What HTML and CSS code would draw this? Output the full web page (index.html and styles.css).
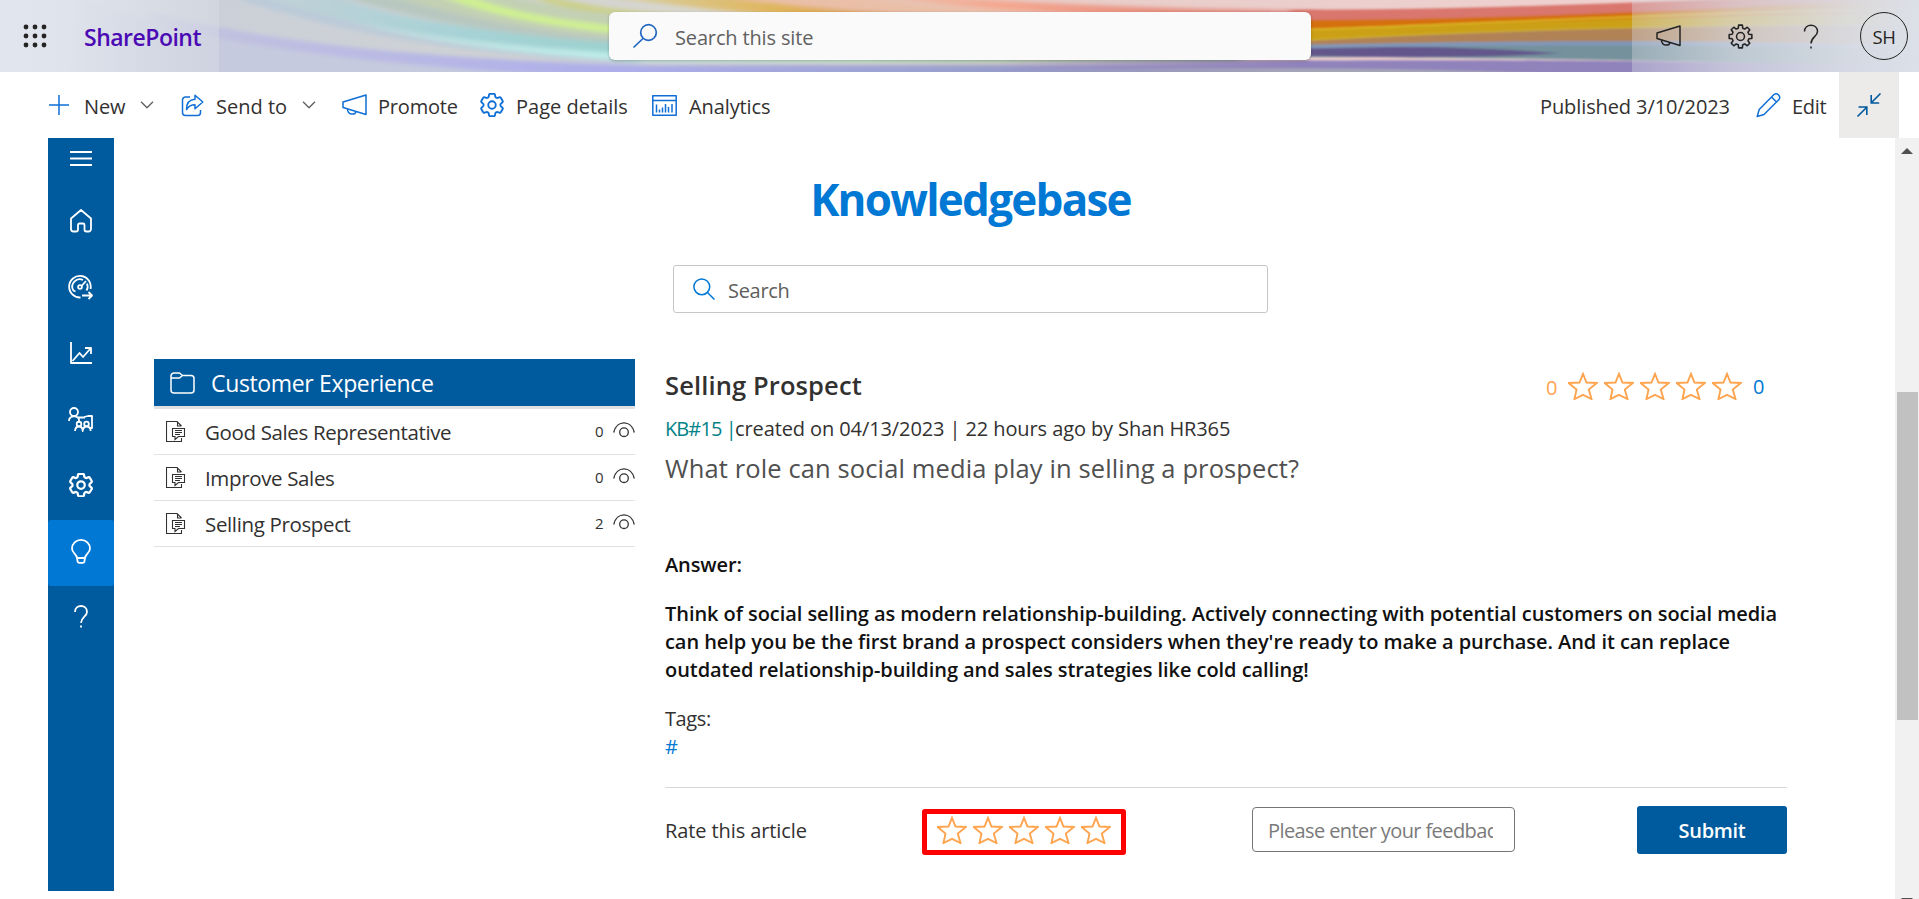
FILE: index.html
```html
<!DOCTYPE html>
<html lang="en">
<head>
<meta charset="utf-8">
<title>Knowledgebase</title>
<link rel="stylesheet" href="styles.css">
</head>
<body>
<svg class="defs" aria-hidden="true">
  <symbol id="gear6" viewBox="2.4 2.4 19.2 19.2"><path d="M9.594 3.94c.09-.542.56-.94 1.11-.94h2.593c.55 0 1.02.398 1.11.94l.213 1.281c.063.374.313.686.645.87.074.04.147.083.22.127.325.196.72.257 1.075.124l1.217-.456a1.125 1.125 0 0 1 1.37.49l1.296 2.247a1.125 1.125 0 0 1-.26 1.431l-1.003.827c-.293.241-.438.613-.43.992a7.723 7.723 0 0 1 0 .255c-.008.378.137.75.43.991l1.004.827c.424.35.534.955.26 1.43l-1.298 2.247a1.125 1.125 0 0 1-1.369.491l-1.217-.456c-.355-.133-.75-.072-1.076.124a6.47 6.47 0 0 1-.22.128c-.331.183-.581.495-.644.869l-.213 1.281c-.09.543-.56.94-1.11.94h-2.594c-.55 0-1.019-.398-1.11-.94l-.213-1.281c-.062-.374-.312-.686-.644-.87a6.52 6.52 0 0 1-.22-.127c-.325-.196-.72-.257-1.076-.124l-1.217.456a1.125 1.125 0 0 1-1.369-.49l-1.297-2.247a1.125 1.125 0 0 1 .26-1.431l1.004-.827c.292-.24.437-.613.43-.991a6.932 6.932 0 0 1 0-.255c.007-.38-.138-.751-.43-.992l-1.004-.827a1.125 1.125 0 0 1-.26-1.43l1.297-2.247a1.125 1.125 0 0 1 1.37-.491l1.216.456c.356.133.751.072 1.076-.124.072-.044.146-.086.22-.128.332-.183.582-.495.644-.869l.214-1.28Z"/><circle cx="12" cy="12" r="3"/></symbol>
  <symbol id="mega" viewBox="0 0 25 22"><path d="M24 1v19.5L1 13.5V8Z"/><path d="M5.500 15.200c.3 6 7.500 6 8.500 2.500"/></symbol>
  <symbol id="star" viewBox="0 0 30 28"><path d="M15 1.800l3.500 8.700 10.300.5-8 6.500 2.700 9.500L15 22.800 6.500 27l2-9.500-7.800-6.500 10.800-.5Z"/></symbol>
  <symbol id="doc" viewBox="0 0 20 21"><path d="M15.500 17v3.500H.5V.5h10.500L15.500 5M11.500.5V5h4"/><path d="M6.500 7.500h12v8h-6l-3.500 3v-3H6.500Z" fill="#fff"/><path d="M9 9.500h7M9 11.500h7M9 13.500h5"/></symbol>
  <symbol id="eye" viewBox="0 0 22 16"><path d="M.7 10.500C3.500-2.400 18.500-2.400 21.300 10.500"/><circle cx="11" cy="10.200" r="4.300"/></symbol>
  <symbol id="chev" viewBox="0 0 14 8"><path d="M1 .8l6 6 6-6"/></symbol>
</svg>

<header class="suite">
  <svg class="banner" viewBox="0 0 1919 72" preserveAspectRatio="none" aria-hidden="true">
    <defs>
      <linearGradient id="base"><stop offset="0" stop-color="#d9dde6"/><stop offset=".12" stop-color="#cbd0d8"/><stop offset=".25" stop-color="#cfd2d4"/><stop offset=".36" stop-color="#d8d6cf"/><stop offset=".55" stop-color="#e8cdc9"/><stop offset="1" stop-color="#f2d3d3"/></linearGradient>
      <linearGradient id="cy"><stop offset="0" stop-color="#c4d0d8"/><stop offset=".5" stop-color="#a8d2d6"/><stop offset="1" stop-color="#9ad2ce"/></linearGradient>
      <linearGradient id="ltcy"><stop offset="0" stop-color="#c0d4da"/><stop offset=".4" stop-color="#bdf2ec"/><stop offset=".6" stop-color="#b8f6cc"/><stop offset="1" stop-color="#8fa98c"/></linearGradient>
      <linearGradient id="pu"><stop offset="0" stop-color="#c4c4de"/><stop offset=".4" stop-color="#adaeea"/><stop offset=".7" stop-color="#989fcc"/><stop offset="1" stop-color="#8c7fba"/></linearGradient>
      <linearGradient id="gold"><stop offset="0" stop-color="#d6d2a8"/><stop offset=".5" stop-color="#e0b55c"/><stop offset="1" stop-color="#d8905a"/></linearGradient>
      <linearGradient id="sal"><stop offset="0" stop-color="#e8c4b0"/><stop offset=".3" stop-color="#f5a890"/><stop offset="1" stop-color="#d9756c"/></linearGradient>
      <linearGradient id="fade"><stop offset="0" stop-color="#dce0e8" stop-opacity=".35"/><stop offset=".35" stop-color="#dce0e8" stop-opacity=".7"/><stop offset=".75" stop-color="#dce0e8" stop-opacity=".92"/><stop offset="1" stop-color="#dce0e8"/></linearGradient>
      <linearGradient id="fadel"><stop offset="0" stop-color="#e1e5ed"/><stop offset=".3" stop-color="#dfe3eb"/><stop offset="1" stop-color="#d8dce4" stop-opacity=".5"/></linearGradient>
      <linearGradient id="in"><stop offset="0" stop-color="#fff" stop-opacity="0"/><stop offset="1" stop-color="#fff"/></linearGradient>
      <mask id="reveal" maskUnits="userSpaceOnUse" x="1000" y="-10" width="930" height="100"><rect x="1000" y="-10" width="300" height="100" fill="url(#in)"/><rect x="1300" y="-10" width="630" height="100" fill="#fff"/></mask>
      <filter id="soft" x="-2%" y="-20%" width="104%" height="140%"><feGaussianBlur stdDeviation="5 2"/></filter>
      <filter id="fine" x="-2%" y="-20%" width="104%" height="140%"><feGaussianBlur stdDeviation="3 .8"/></filter>
    </defs>
    <rect width="1919" height="72" fill="url(#base)"/>
    <g filter="url(#soft)">
      <path d="M80 0C200 40 400 66 700 76H60Z" fill="#c5cade"/>
      <path d="M230 -4C310 24 430 54 640 64V48C480 44 350 24 280 -4Z" fill="#bccad8"/>
      <path d="M150 12C300 48 430 58 640 65L1320 64V80H640C450 70 300 58 150 24Z" fill="url(#pu)"/>
      <path d="M285 -4C360 34 480 53 640 61L1240 62V52H640C500 46 400 32 330 6Z" fill="url(#ltcy)"/>
      <path d="M250 -6C330 20 440 44 640 54V40C500 36 390 20 330 -6Z" fill="url(#cy)"/>
      <path d="M340 -4C400 14 480 36 640 44V30C540 26 440 12 390 -4Z" fill="#b8c8c0"/>
      <path d="M390 -4C450 14 530 32 640 41V14C580 10 540 4 510 -4Z" fill="#c3d0b4"/>
      <path d="M440 -4C490 16 550 27 640 36V28C570 22 510 12 470 -4Z" fill="#cff090"/>
      <path d="M550 -4C600 10 660 14 720 15H640C590 14 550 6 530 -4Z" fill="#ccd08a"/>
      <path d="M600 -4C680 6 740 13 800 17H960C860 12 780 4 730 -4Z" fill="url(#gold)"/>
      <path d="M720 -4C800 8 880 14 960 16H1100C980 10 900 4 860 -4Z" fill="#eabfa8"/>
      <path d="M860 -4C940 6 1020 12 1120 16H1320V11C1180 10 1040 4 940 -4Z" fill="url(#sal)"/>
    </g>
    <g filter="url(#fine)" mask="url(#reveal)">
      <path d="M1000 60C1320 62 1400 58 1700 62L1930 64V80H1000Z" fill="#9082bb"/>
      <path d="M1000 70C1200 67 1400 67 1560 74H1000Z" fill="#a5a5b8"/>
      <path d="M1290 44C1450 38 1600 36 1930 46V66C1700 62 1450 56 1290 57Z" fill="#74919c"/>
      <path d="M1290 48C1380 44 1480 48 1560 53 1480 59 1380 57 1290 56Z" fill="#62578b"/>
      <path d="M1290 42C1450 41 1600 36 1930 46V51C1650 42 1450 46 1290 49Z" fill="#8197b8"/>
      <path d="M1290 36C1450 26 1650 18 1930 10V46C1650 38 1450 42 1290 45Z" fill="#b08257"/>
      <path d="M1290 30C1450 24 1600 14 1930 6V24C1700 24 1480 28 1290 42Z" fill="#cba012"/>
      <path d="M1290 18C1450 18 1600 12 1930 -4V14C1700 14 1480 24 1290 31Z" fill="#d4700f"/>
      <path d="M1290 10C1450 10 1600 4 1800 -4H1930C1700 10 1500 20 1290 20Z" fill="#d9766d"/>
      <path d="M1290 41C1450 32 1650 24 1930 24" fill="none" stroke="#d0b02c" stroke-width="1.500"/>
      <path d="M1290 30C1450 26 1600 15 1930 8" fill="none" stroke="#dec02a" stroke-width="1.500"/>
    </g>
    <rect width="219" height="72" fill="url(#fadel)"/>
    <rect x="1632" width="287" height="72" fill="url(#fade)"/>
  </svg>
  <svg class="waffle" viewBox="0 0 24 24" width="24" height="24"><g fill="#242424"><circle cx="3" cy="3" r="2.400"/><circle cx="12" cy="3" r="2.400"/><circle cx="21" cy="3" r="2.400"/><circle cx="3" cy="12" r="2.400"/><circle cx="12" cy="12" r="2.400"/><circle cx="21" cy="12" r="2.400"/><circle cx="3" cy="21" r="2.400"/><circle cx="12" cy="21" r="2.400"/><circle cx="21" cy="21" r="2.400"/></g></svg>
  <a class="brand">SharePoint</a>
  <div class="site-search">
    <svg class="ico" width="26" height="26" viewBox="0 0 26 26"><circle cx="16.500" cy="9.500" r="7.800"/><path d="M11 15.500L1.500 24.500"/></svg>
    <span>Search this site</span>
  </div>
  <div class="suite-actions">
    <svg class="ico" width="25" height="22"><use href="#mega"/></svg>
    <svg class="ico" width="25" height="25" viewBox="-12 -12 24 24"><path d="M-2.150-8L-1.800-10.900H1.800L2.150-8 4.140-7.180 6.450-8.900 8.900-6.450 7.180-4.140 8-2.150 10.900-1.800V1.800L8 2.150 7.180 4.140 8.900 6.450 6.450 8.900 4.140 7.180 2.150 8 1.800 10.900H-1.800L-2.150 8-4.140 7.180-6.450 8.900-8.900 6.450-7.180 4.140-8 2.150-10.900 1.800V-1.800L-8-2.150-7.180-4.140-8.900-6.450-6.450-8.900-4.140-7.180Z"/><circle r="3.800"/></svg>
    <svg class="ico" width="16" height="25" viewBox="0 0 16 25"><path d="M1.500 7.500C1.500-1 14.500-1 14.500 7.500c0 5-6.500 5.500-6.500 12M8 22.500v2"/></svg>
    <span class="avatar">SH</span>
  </div>
</header>

<nav class="commands">
  <svg class="ico c-new" width="20" height="20" viewBox="0 0 20 20"><path d="M10 0v20M0 10h20"/></svg>
  <span class="t-new">New</span>
  <svg class="ico chev" width="14" height="8"><use href="#chev"/></svg>
  <svg class="ico c-send" width="23" height="23" viewBox="0 0 23 23"><path d="M9 3H4.500A3 3 0 0 0 1.500 6v12.500a3 3 0 0 0 3 3h12a3 3 0 0 0 3-3V16"/><path d="M14 1.200l7.800 6.800-7.800 6.800v-4c-4 0-6.500 1.500-8.500 4.700 0-6 3-10 8.500-10.300Z"/></svg>
  <span class="t-send">Send to</span>
  <svg class="ico chev" width="14" height="8"><use href="#chev"/></svg>
  <svg class="ico c-mega" width="25" height="22"><use href="#mega"/></svg>
  <span class="t-promote">Promote</span>
  <svg class="ico c-gear" width="24" height="24"><use href="#gear6"/></svg>
  <span class="t-details">Page details</span>
  <svg class="ico c-chart" width="25" height="21" viewBox="0 0 25 21"><path d="M.8.800h23.400v19.400H.8ZM.8 5.500h23.400"/><path d="M4.500 9.500v8M7.500 14.500v3M10.500 12.500v5M13.500 9v8.500M16.500 12v5.500M20 9v8.500"/></svg>
  <span class="t-analytics">Analytics</span>
  <span class="published">Published 3/10/2023</span>
  <svg class="ico c-edit" width="25" height="26" viewBox="0 0 25 26"><path d="M1.200 24.500l2-7L18 2.500a3.600 3.600 0 0 1 5 5L8 22.500ZM15.500 5l5 5"/></svg>
  <span class="t-edit">Edit</span>
  <span class="toggle"><svg class="ico" width="24" height="24" viewBox="0 0 24 24"><path d="M23.500.5l-9 9M14.200 2v8h8M.5 23.500l9-9M1.500 14h8.300v8"/></svg></span>
</nav>

<div class="workspace">
  <aside class="rail">
    <div class="rail-item menu"><svg class="ico" width="22" height="15" viewBox="0 0 22 15"><path d="M0 1h22M0 7.500h22M0 14h22"/></svg></div>
    <div class="rail-item"><svg class="ico" width="22" height="24" viewBox="0 0 22 24"><path d="M1 9.500L11 1l10 8.500V20a2.500 2.500 0 0 1-2.500 2.500h-2A2 2 0 0 1 14.500 20.500V16a1.500 1.500 0 0 0-1.500-1.500H9.500A1.500 1.500 0 0 0 8 16v4.500a2 2 0 0 1-2 2H3.500A2.500 2.500 0 0 1 1 20Z"/></svg></div>
    <div class="rail-item"><svg class="ico" width="25" height="25" viewBox="0 0 25 25"><path d="M12.500 22.500A10.800 10.800 0 1 1 22.500 14"/><path d="M5.300 15.500A7.500 7.500 0 0 1 15 5M19 8.500a7.500 7.500 0 0 1-.5 7M5.300 15.500l2.200 1M18 6l-4.500 5"/><circle cx="12" cy="12" r="1.900"/><path d="M14 20.500h10M20.500 17l3.500 3.500-3.500 3.500"/></svg></div>
    <div class="rail-item"><svg class="ico" width="22" height="22" viewBox="0 0 22 22"><path d="M1 0v21h21M2.500 19L9.500 11l3.500 4 7.500-8.500M15 6h6v6"/></svg></div>
    <div class="rail-item"><svg class="ico" width="25" height="25" viewBox="0 0 25 25"><circle cx="6" cy="5" r="4"/><path d="M1 14c0-6 10-6 10-1v3M10 10.500h7M16 10l4-1h4v12h-2"/><circle cx="11" cy="17" r="2.300"/><circle cx="18.500" cy="17" r="2.300"/><path d="M7 24c.5-6 7.500-6 7.700 0 .5-6 7.500-6 8 0"/></svg></div>
    <div class="rail-item"><svg class="ico" width="24" height="24"><use href="#gear6"/></svg></div>
    <div class="rail-item active"><svg class="ico" width="20" height="25" viewBox="0 0 20 25"><path d="M6 19C5.500 15 1 14 1 9.500a9 8.700 0 0 1 18 0C19 14 14.500 15 14 19l-.5 3a2 2 0 0 1-2 1.800h-3a2 2 0 0 1-2-1.800ZM6 19h8"/></svg></div>
    <div class="rail-item help"><svg class="ico" width="14" height="23" viewBox="0 0 14 23"><path d="M1 7C1-1 13-1 13 7c0 4.500-6 5-6 11M7 20.500v2"/></svg></div>
  </aside>

  <main class="content">
    <h1>Knowledgebase</h1>
    <div class="kb-search">
      <svg class="ico" width="22" height="22" viewBox="0 0 22 22"><circle cx="8.800" cy="8.800" r="7.900"/><path d="M14.500 14.500l7 7"/></svg>
      <span>Search</span>
    </div>
    <div class="columns">
      <section class="list">
        <h2><svg class="ico" width="25" height="22" viewBox="0 0 25 22"><path d="M1 4a3 3 0 0 1 3-3h5.500l3 2.500H21a3 3 0 0 1 3 3V18a3 3 0 0 1-3 3H4a3 3 0 0 1-3-3ZM1 6h8.500l3-2.500"/></svg>Customer Experience</h2>
        <div class="row"><svg class="ico doc" width="20" height="21"><use href="#doc"/></svg><span class="name">Good Sales Representative</span><span class="count">0</span><svg class="ico eye" width="22" height="16"><use href="#eye"/></svg></div>
        <div class="row"><svg class="ico doc" width="20" height="21"><use href="#doc"/></svg><span class="name">Improve Sales</span><span class="count">0</span><svg class="ico eye" width="22" height="16"><use href="#eye"/></svg></div>
        <div class="row"><svg class="ico doc" width="20" height="21"><use href="#doc"/></svg><span class="name">Selling Prospect</span><span class="count">2</span><svg class="ico eye" width="22" height="16"><use href="#eye"/></svg></div>
      </section>

      <article class="article">
        <div class="title-row">
          <h3>Selling Prospect</h3>
          <span class="score">0</span>
          <span class="stars"><svg width="30" height="28"><use href="#star"/></svg><svg width="30" height="28"><use href="#star"/></svg><svg width="30" height="28"><use href="#star"/></svg><svg width="30" height="28"><use href="#star"/></svg><svg width="30" height="28"><use href="#star"/></svg></span>
          <span class="votes">0</span>
        </div>
        <p class="meta"><span class="kb-id">KB#15 |</span>created on 04/13/2023 | 22 hours ago by Shan HR365</p>
        <p class="question">What role can social media play in selling a prospect?</p>
        <p class="answer-label">Answer:</p>
        <p class="answer">Think of social selling as modern relationship-building. Actively connecting with potential customers on social media<br>can help you be the first brand a prospect considers when they're ready to make a purchase. And it can replace<br>outdated relationship-building and sales strategies like cold calling!</p>
        <div class="tags">Tags:<a>#</a></div>
        <div class="rate">
          <span class="rate-label">Rate this article</span>
          <span class="stars boxed"><svg width="30" height="28"><use href="#star"/></svg><svg width="30" height="28"><use href="#star"/></svg><svg width="30" height="28"><use href="#star"/></svg><svg width="30" height="28"><use href="#star"/></svg><svg width="30" height="28"><use href="#star"/></svg></span>
          <input class="feedback" placeholder="Please enter your feedback">
          <button class="submit">Submit</button>
        </div>
      </article>
    </div>
  </main>

  <div class="scrollbar">
    <svg width="12" height="6" viewBox="0 0 12 6"><path d="M0 6L6 0l6 6Z" fill="#505050"/></svg>
    <div class="thumb"></div>
    <svg width="12" height="6" viewBox="0 0 12 6"><path d="M0 0h12L6 6Z" fill="#505050"/></svg>
  </div>
</div>
</body>
</html>
```
FILE: styles.css
```css
* { box-sizing: border-box; margin: 0; padding: 0; }
body {
  width: 1919px; height: 899px; overflow: hidden; background: #fff; color: #323130;
  font-family: "Open Sans", "Noto Sans", sans-serif; font-size: 20px; line-height: 28px;
  letter-spacing: -0.1px; white-space: nowrap;
}
.defs { position: absolute; width: 0; height: 0; }
svg { display: block; flex: none; }
.ico { fill: none; stroke: currentColor; stroke-width: 1.5; stroke-linejoin: round; overflow: visible; }

/* Suite bar */
.suite { position: relative; display: flex; align-items: center; height: 72px; }
.banner { position: absolute; inset: 0; width: 1919px; height: 72px; z-index: -1; }
.waffle { margin-left: 23px; }
.brand { margin: 2px 0 0 37px; width: 525px; font-size: 23px; font-weight: 600; letter-spacing: -0.5px; color: #4b0ab4; }
.site-search {
  display: flex; align-items: center; width: 702px; height: 48px; padding-left: 23px; gap: 17px;
  background: #fafafa; border-radius: 6px; color: #616161; box-shadow: 0 1px 3px rgba(0,0,0,.25);
}
.site-search .ico { color: #1f66c1; stroke-width: 1.7; }
.site-search span { letter-spacing: -0.15px; padding-top: 3px; }
.suite-actions { display: flex; align-items: center; margin-left: 345px; color: #242424; }
.suite-actions .ico + .ico { margin-left: 47px; }
.suite-actions .ico + .ico + .ico { margin-left: 50px; }
.avatar {
  width: 48px; height: 48px; margin-left: 41px; border: 1.5px solid #242424; border-radius: 50%;
  font-size: 18.5px; line-height: 47px; text-align: center; letter-spacing: -0.4px;
}

/* Command bar */
.commands { display: flex; align-items: center; height: 66px; padding-left: 49px; }
.commands > span:not(.toggle) { padding-top: 3px; }
.commands .ico { color: #0f6fd6; }
.commands .chev { color: #605e5c; stroke-width: 1.3; }
.t-new { width: 56px; margin-left: 15px; }
.c-send { margin-left: 27px; }
.t-send { width: 86px; margin-left: 12px; letter-spacing: 0; }
.c-mega { margin-left: 26px; }
.t-promote { width: 102px; margin-left: 11px; letter-spacing: -0.2px; }
.t-details { width: 136px; margin-left: 12px; letter-spacing: 0; }
.t-analytics { width: 851px; margin-left: 12px; }
.published { width: 216px; }
.t-edit { width: 47px; margin-left: 11px; letter-spacing: -0.3px; }
.toggle { display: grid; place-items: center; width: 60px; height: 66px; background: #edebe9; }
.commands .toggle .ico { color: #005a9e; stroke-width: 1.6; stroke-linejoin: miter; }

/* Workspace */
.workspace { display: flex; height: 761px; padding-left: 48px; }
.rail { width: 66px; height: 753px; background: #005a9e; color: #fff; }
.rail-item { display: grid; place-items: center; height: 66px; padding-right: 1px; }
.rail-item.menu { height: 50px; padding-bottom: 9px; }
.rail-item .ico { stroke-width: 1.8; }
.rail-item.active { margin-top: 2px; padding-bottom: 4px; background: #0078d4; border-radius: 3px; }
.rail-item.help { padding-bottom: 5px; }
.content { width: 1781px; padding: 0 108px 0 40px; }
h1 { height: 118px; font-size: 44px; line-height: 122px; letter-spacing: -1.75px; text-align: center; color: #0078d4; }
.kb-search {
  display: flex; align-items: center; gap: 13px; width: 595px; height: 48px; margin: 9px auto 46px;
  padding-left: 19px; border: 1px solid #c8c6c4; border-radius: 3px; color: #605e5c; letter-spacing: -0.3px;
}
.kb-search .ico { color: #0078d4; }
.kb-search span { padding-top: 3px; }
.columns { display: flex; gap: 30px; }

/* Topic list */
.list { width: 481px; }
.list h2 {
  display: flex; align-items: center; gap: 16px; height: 50px; padding: 0 16px; background: #005a9e;
  border-bottom: 3px solid #e1e1e1; color: #fff; font-size: 23px; font-weight: 500; letter-spacing: -0.35px;
}
.row { display: flex; align-items: center; height: 46px; padding-left: 12px; border-bottom: 1px solid #e1e1e1; }
.row .ico { stroke-width: 1.3; stroke-linejoin: miter; }
.row .doc { stroke-width: 1.1; }
.name { flex: 1; margin-left: 19px; font-size: 20.500px; letter-spacing: -0.36px; }
.count { width: 18px; font-size: 15px; margin-top: -1px; }
.row .eye { margin-top: -3px; }

/* Article */
.article { width: 1122px; }
.title-row { display: flex; align-items: center; height: 50px; padding-top: 1px; }
h3 { width: 881px; font-size: 25.5px; font-weight: 570; letter-spacing: 0.12px; }
.score { width: 22px; color: #ffa44f; margin-top: 6px; }
.stars { display: flex; gap: 6px; fill: none; stroke: #ffa44f; stroke-width: 1.9; }
.title-row .stars { margin-top: 2px; }
.votes { margin-left: 11px; margin-top: 4px; color: #0078d4; }
.meta { height: 38px; line-height: 40px; }
.kb-id { letter-spacing: -0.9px; color: #038387; display: inline-block; width: 70px; }
.question { font-size: 25.5px; line-height: 42px; letter-spacing: 0.12px; color: #505050; }
.answer-label { margin-top: 62px; font-weight: 580; color: #111; }
.answer { margin-top: 21px; font-weight: 580; letter-spacing: -0.06px; color: #111; }
.tags { display: flex; flex-direction: column; margin-top: 21px; letter-spacing: -0.4px; }
.tags a { color: #0078d4; line-height: 27px; }
.rate { display: flex; align-items: center; height: 67px; margin-top: 27px; padding-top: 17px; border-top: 1px solid #d8d8d8; }
.rate-label { width: 257px; padding-top: 3px; }
.boxed { width: 204px; height: 46px; margin-top: 4px; padding: 2px 0 0 10px; border: 5px solid #f00; border-radius: 3px; }
.feedback {
  width: 263px; height: 45px; margin-left: 126px; padding: 2px 21px 0 15px; border: 1px solid #767676; border-radius: 4px;
  font: inherit; letter-spacing: -0.6px; color: #323130; background: #fff;
}
.feedback::placeholder { color: #7a7a7a; }
.submit {
  width: 150px; height: 48px; margin-left: auto; padding-top: 2px; border: 0; border-radius: 3px; background: #005a9e;
  font: inherit; font-weight: 570; letter-spacing: -0.3px; color: #fff;
}

/* Scrollbar */
.scrollbar { display: flex; flex-direction: column; align-items: center; width: 24px; background: #f1f1f1; padding-top: 10px; }
.thumb { width: 21px; height: 328px; margin: 238px 0 178px; background: #c1c1c1; flex: none; }
```
